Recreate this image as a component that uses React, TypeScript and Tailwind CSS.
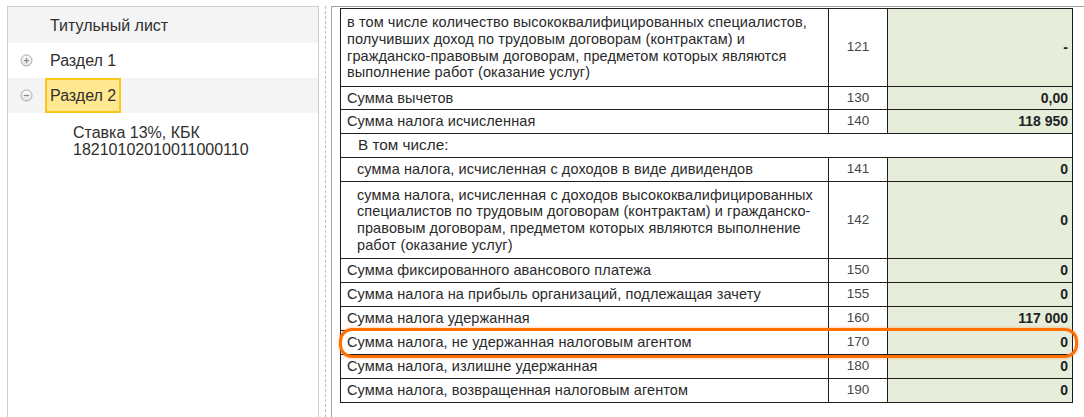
import React from "react";

type Row = {
  label: React.ReactNode;
  code?: string;
  value?: string;
  h: number;
  indent?: boolean;
  section?: boolean;
};

const rows: Row[] = [
  {
    label: (
      <>
        в том числе количество высококвалифицированных специалистов,
        <br />
        получивших доход по трудовым договорам (контрактам) и
        <br />
        гражданско-правовым договорам, предметом которых являются
        <br />
        выполнение работ (оказание услуг)
      </>
    ),
    code: "121",
    value: "-",
    h: 78,
  },
  { label: "Сумма вычетов", code: "130", value: "0,00", h: 23 },
  { label: "Сумма налога исчисленная", code: "140", value: "118 950", h: 24 },
  { label: "В том числе:", h: 24, section: true },
  {
    label: "сумма налога, исчисленная с доходов в виде дивидендов",
    code: "141",
    value: "0",
    h: 24,
    indent: true,
  },
  {
    label: (
      <>
        сумма налога, исчисленная с доходов высококвалифицированных
        <br />
        специалистов по трудовым договорам (контрактам) и гражданско-
        <br />
        правовым договорам, предметом которых являются выполнение
        <br />
        работ (оказание услуг)
      </>
    ),
    code: "142",
    value: "0",
    h: 77,
    indent: true,
  },
  { label: "Сумма фиксированного авансового платежа", code: "150", value: "0", h: 24 },
  { label: "Сумма налога на прибыль организаций, подлежащая зачету", code: "155", value: "0", h: 24 },
  { label: "Сумма налога удержанная", code: "160", value: "117 000", h: 24 },
  { label: "Сумма налога, не удержанная налоговым агентом", code: "170", value: "0", h: 24 },
  { label: "Сумма налога, излишне удержанная", code: "180", value: "0", h: 24 },
  { label: "Сумма налога, возвращенная налоговым агентом", code: "190", value: "0", h: 24 },
];

function TreeToggle({ open }: { open: boolean }) {
  const id = open ? "toggle-minus" : "toggle-plus";
  return (
    <svg width="13" height="13" viewBox="0 0 13 13" className="shrink-0">
      <defs>
        <linearGradient id={id} x1="0" y1="0" x2="0" y2="1">
          <stop offset="0" stopColor="#ffffff" />
          <stop offset="1" stopColor="#e2e2e2" />
        </linearGradient>
      </defs>
      <circle cx="6.5" cy="6.5" r="5.5" fill={`url(#${id})`} stroke="#a8a8a8" />
      <path d="M3.8 6.5h5.4" stroke="#8a8a8a" strokeWidth="1.2" />
      {!open && <path d="M6.5 3.8v5.4" stroke="#8a8a8a" strokeWidth="1.2" />}
    </svg>
  );
}

function TreePanel() {
  return (
    <div className="w-[312px] shrink-0 border-l border-t border-r border-[#cfcfcf] text-[16px] text-[#2f2f2f] leading-[17px]">
      <div className="h-[36px] bg-[#f4f4f4] flex items-center pl-[42px]">Титульный лист</div>
      <div className="h-[35px] flex items-center pl-[12px]">
        <TreeToggle open={false} />
        <span className="ml-[17px]">Раздел 1</span>
      </div>
      <div className="h-[35px] bg-[#f4f4f4] flex items-center pl-[12px]">
        <TreeToggle open={true} />
        <span className="ml-[12px] h-full flex items-center px-[3px] bg-[#ffe88f] border-2 border-[#f7c71a]">
          Раздел 2
        </span>
      </div>
      <div className="pl-[65px] pt-[11px]">
        Ставка 13%, КБК
        <br />
        18210102010011000110
      </div>
    </div>
  );
}

function ReportTable() {
  return (
    <table className="w-[732px] border-collapse table-fixed text-[14.5px] tracking-[0.1px] text-[#2a2a2a] leading-[16.6px]">
      <colgroup>
        <col className="w-[488px]" />
        <col className="w-[59px]" />
        <col className="w-[185px]" />
      </colgroup>
      <tbody>
        {rows.map((r, i) =>
          r.section ? (
            <tr key={i} style={{ height: r.h }}>
              <td colSpan={3} className="border border-[#1e1e1e] pl-[17px] text-[15.3px] tracking-normal align-middle">
                {r.label}
              </td>
            </tr>
          ) : (
            <tr key={i} style={{ height: r.h }}>
              <td
                className={`border border-[#1e1e1e] align-middle py-0 whitespace-nowrap ${
                  r.indent ? "pl-[16px]" : "pl-[6px]"
                }`}
              >
                {r.label}
              </td>
              <td className="border border-[#1e1e1e] text-center text-[#474747] text-[13.5px] tracking-normal align-middle">
                {r.code}
              </td>
              <td className="border border-[#1e1e1e] bg-[#e6eedb] text-right pr-[4px] font-bold text-[14px] tracking-normal text-[#222] align-middle">
                {r.value}
              </td>
            </tr>
          )
        )}
      </tbody>
    </table>
  );
}

export default function App() {
  return (
    <div
      className="relative w-[1084px] h-[417px] overflow-hidden bg-white flex pt-[6px] pl-[7px]"
      style={{ fontFamily: '"Liberation Sans", Arial, sans-serif' }}
    >
      <TreePanel />
      <div className="ml-[6px] w-0 border-l border-dashed border-[#bdbdbd]" />
      <div className="ml-[5px] flex-1 border-l border-t border-[#a3a3a3] pl-[8px] pt-[1px]">
        <ReportTable />
      </div>
      <div className="absolute left-[339px] top-[328px] w-[739px] h-[30px] border-[3.5px] border-[#ff6f00] rounded-[13px] shadow-[0_0_3px_rgba(255,111,0,0.5)] pointer-events-none" />
    </div>
  );
}
